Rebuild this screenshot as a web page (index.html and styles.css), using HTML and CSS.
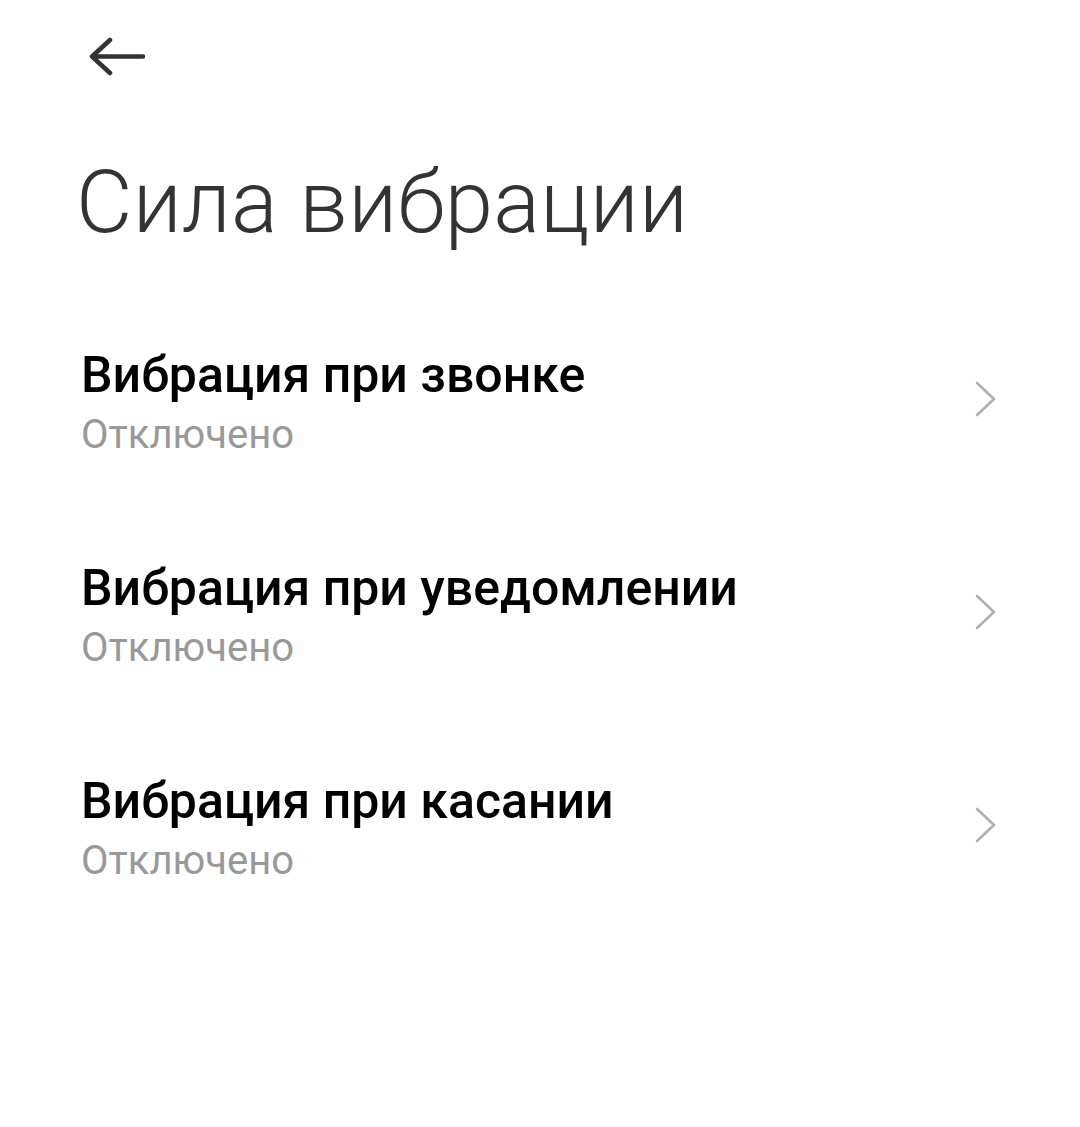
FILE: index.html
```html
<!DOCTYPE html>
<html lang="ru">
<head>
<meta charset="utf-8">
<link rel="stylesheet" href="styles.css">
</head>
<body>
<div class="screen">
  <div class="toolbar">
    <svg class="back" width="60" height="40" viewBox="0 0 60 40">
      <path d="M57 19.5H6M24 3L6 19.5L24 36" fill="none" stroke="#333" stroke-width="4.5" stroke-linecap="round" stroke-linejoin="round"/>
    </svg>
  </div>
  <h1 class="title">Сила вибрации</h1>
  <div class="list">
    <div class="row">
      <div class="texts">
        <div class="row-title">Вибрация при звонке</div>
        <div class="row-sub">Отключено</div>
      </div>
      <svg class="chev" width="26" height="36" viewBox="0 0 26 36"><path d="M3 2L20 18L3 34" fill="none" stroke="#b0b0b0" stroke-width="2.6" stroke-linecap="round" stroke-linejoin="round"/></svg>
    </div>
    <div class="row">
      <div class="texts">
        <div class="row-title">Вибрация при уведомлении</div>
        <div class="row-sub">Отключено</div>
      </div>
      <svg class="chev" width="26" height="36" viewBox="0 0 26 36"><path d="M3 2L20 18L3 34" fill="none" stroke="#b0b0b0" stroke-width="2.6" stroke-linecap="round" stroke-linejoin="round"/></svg>
    </div>
    <div class="row">
      <div class="texts">
        <div class="row-title">Вибрация при касании</div>
        <div class="row-sub">Отключено</div>
      </div>
      <svg class="chev" width="26" height="36" viewBox="0 0 26 36"><path d="M3 2L20 18L3 34" fill="none" stroke="#b0b0b0" stroke-width="2.6" stroke-linecap="round" stroke-linejoin="round"/></svg>
    </div>
  </div>
</div>
</body>
</html>
```
FILE: styles.css
```css
html, body {
  margin: 0;
  padding: 0;
  background: #fff;
}
.screen {
  width: 1080px;
  height: 1127px;
  font-family: Roboto, "Noto Sans", sans-serif;
  overflow: hidden;
}
.toolbar {
  height: 116px;
  padding-left: 86px;
  padding-top: 37px;
  box-sizing: border-box;
}
.back {
  display: block;
}
.title {
  margin: 0;
  padding-left: 76px;
  font-weight: 300;
  font-size: 87px;
  line-height: 180px;
  height: 180px;
  color: #333;
  margin-top: -4px;
  letter-spacing: 0.2px;
}
.list {
  display: flex;
  flex-direction: column;
}
.row {
  display: flex;
  align-items: center;
  justify-content: space-between;
  height: 213px;
  padding-left: 81px;
  padding-right: 80px;
  box-sizing: border-box;
}
.texts {
  display: flex;
  flex-direction: column;
  padding-top: 8px;
}
.row-title {
  font-size: 50px;
  font-weight: 500;
  color: #000;
  line-height: 60px;
}
.row-sub {
  font-size: 40px;
  font-weight: 400;
  color: #999;
  line-height: 50px;
  margin-top: 5px;
}
.chev {
  display: block;
}
```
